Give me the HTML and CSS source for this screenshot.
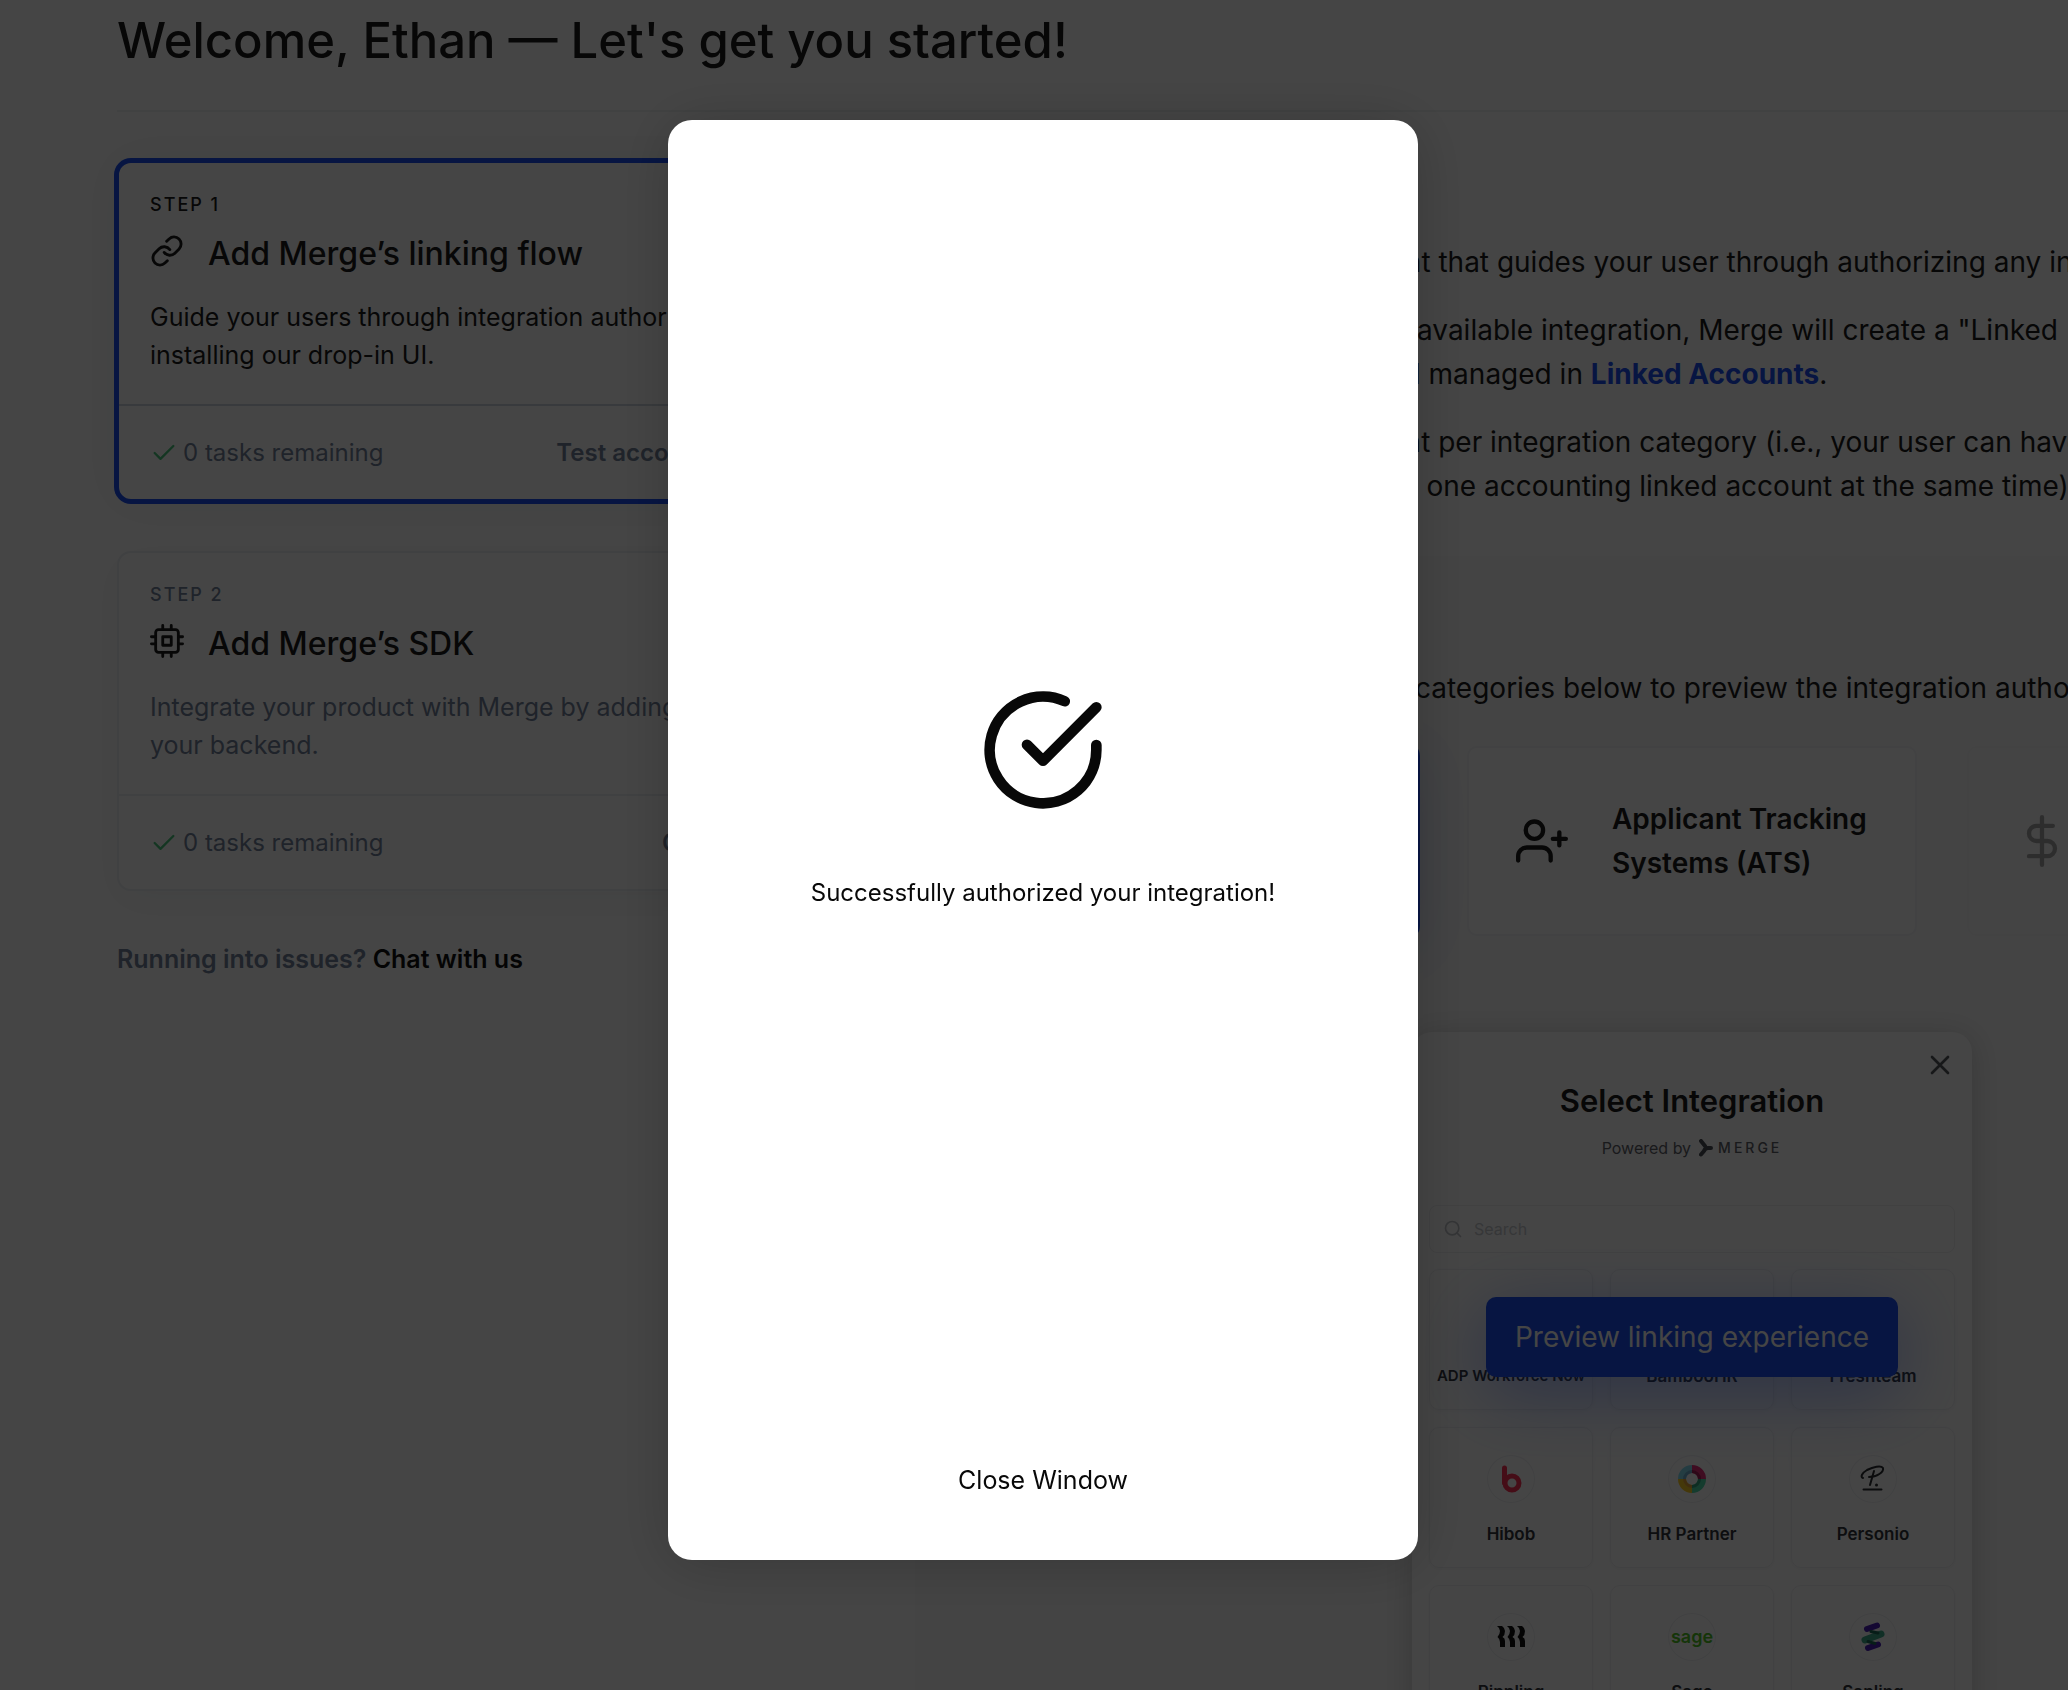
FILE: index.html
```
<!DOCTYPE html>
<html lang="en">
<head>
  <meta charset="UTF-8">
  <meta name="viewport" content="width=device-width, initial-scale=1.0">
  <title>Get started | Merge</title>
  <link rel="stylesheet" href="styles.css">
</head>
<body>
  <div class="page">
    <header class="page-header">
      <h1>Welcome, Ethan — Let's get you started!</h1>
    </header>

    <div class="columns">
      <aside class="steps">
        <section class="step-card active">
          <div class="step-body">
            <div class="step-label">Step 1</div>
            <div class="step-title">
              <svg class="icon" viewBox="0 0 24 24" width="34" height="34"><path d="M10 13a5 5 0 0 0 7.54.54l3-3a5 5 0 0 0-7.07-7.07l-1.72 1.71"/><path d="M14 11a5 5 0 0 0-7.54-.54l-3 3a5 5 0 0 0 7.07 7.07l1.71-1.71"/></svg>
              <h2>Add Merge’s linking flow</h2>
            </div>
            <p>Guide your users through integration authorization by<br>installing our drop-in UI.</p>
          </div>
          <div class="step-footer">
            <span class="tasks">
              <svg class="icon check" viewBox="0 0 24 24" width="28" height="28"><polyline points="20 6 9 17 4 12"/></svg>
              0 tasks remaining
            </span>
            <a href="#">Test account confirmed</a>
          </div>
        </section>

        <section class="step-card">
          <div class="step-body">
            <div class="step-label">Step 2</div>
            <div class="step-title">
              <svg class="icon" viewBox="0 0 24 24" width="34" height="34"><rect x="4" y="4" width="16" height="16" rx="2"/><rect x="9" y="9" width="6" height="6"/><path d="M9 1v3M15 1v3M9 20v3M15 20v3M20 9h3M20 14h3M1 9h3M1 14h3"/></svg>
              <h2>Add Merge’s SDK</h2>
            </div>
            <p>Integrate your product with Merge by adding our SDK to<br>your backend.</p>
          </div>
          <div class="step-footer">
            <span class="tasks">
              <svg class="icon check" viewBox="0 0 24 24" width="28" height="28"><polyline points="20 6 9 17 4 12"/></svg>
              0 tasks remaining
            </span>
            <a href="#">Go to API docs</a>
          </div>
        </section>

        <p class="help">Running into issues? <a href="#">Chat with us</a></p>
      </aside>

      <main class="content">
        <div class="intro">
          <h2>Add Merge’s linking flow</h2>
          <p>Merge Link is a drop-in component that guides your user through authorizing any integration.</p>
          <p>After your end user authorizes an available integration, Merge will create a "Linked<br>Account" that can be updated and managed in <a href="#">Linked Accounts</a>.</p>
          <p>Users can have one linked account per integration category (i.e., your user can have<br>one HRIS linked account and even one accounting linked account at the same time).</p>
        </div>

        <div class="preview">
          <h2>Preview Merge Link</h2>
          <p>Select one of the main supported categories below to preview the integration authorization flow.</p>

          <div class="categories">
            <button class="category selected" type="button">
              <svg class="icon" viewBox="0 0 24 24" width="52" height="52"><path d="M17 21v-2a4 4 0 0 0-4-4H5a4 4 0 0 0-4 4v2"/><circle cx="9" cy="7" r="4"/><path d="M23 21v-2a4 4 0 0 0-3-3.87M16 3.13a4 4 0 0 1 0 7.75"/></svg>
              <span>HR &amp; Payroll</span>
            </button>
            <button class="category" type="button">
              <svg class="icon" viewBox="0 0 24 24" width="52" height="52"><path d="M16 21v-2a4 4 0 0 0-4-4H5a4 4 0 0 0-4 4v2"/><circle cx="8.500" cy="7" r="4"/><path d="M20 8v6M23 11h-6"/></svg>
              <span>Applicant Tracking<br>Systems (ATS)</span>
            </button>
            <button class="category disabled" type="button" disabled>
              <svg class="icon" viewBox="0 0 24 24" width="52" height="52"><path d="M12 1v22M17 5H9.500a3.500 3.500 0 0 0 0 7h5a3.500 3.500 0 0 1 0 7H6"/></svg>
              <span>Accounting</span>
            </button>
          </div>

          <div class="widget">
            <button class="widget-close" type="button" aria-label="Close">
              <svg class="icon" viewBox="0 0 24 24" width="32" height="32"><path d="M18 6L6 18M6 6l12 12"/></svg>
            </button>
            <h3>Select Integration</h3>
            <div class="powered">
              Powered by
              <span class="merge-logo">
                <svg viewBox="0 0 14 18" width="14" height="18"><path d="M2 2l4 5M12 9H9Q6 9 5 12L2 15.500"/></svg>
                MERGE
              </span>
            </div>

            <label class="search">
              <svg class="icon" viewBox="0 0 24 24" width="20" height="20"><circle cx="11" cy="11" r="8"/><path d="M21 21l-4.300-4.300"/></svg>
              <input type="text" placeholder="Search" aria-label="Search">
            </label>

            <div class="tiles">
              <div class="tile"><div class="logo"></div><div class="name long">ADP Workforce Now</div></div>
              <div class="tile"><div class="logo"></div><div class="name">BambooHR</div></div>
              <div class="tile"><div class="logo"></div><div class="name">Freshteam</div></div>

              <div class="tile">
                <div class="logo">
                  <svg viewBox="0 0 48 48" width="48" height="48"><g fill="none" stroke="#ff3355" stroke-width="5" stroke-linecap="round"><path d="M17.500 13v15"/><circle cx="25" cy="28" r="7"/></g></svg>
                </div>
                <div class="name">Hibob</div>
              </div>
              <div class="tile">
                <div class="logo">
                  <svg viewBox="0 0 48 48" width="48" height="48">
                    <g fill="none" stroke-width="8">
                      <path d="M24 14a10 10 0 0 1 10 10" stroke="#e8307a"/>
                      <path d="M34 24a10 10 0 0 1-10 10" stroke="#4fdcaa"/>
                      <path d="M24 34a10 10 0 0 1-10-10" stroke="#ffd028"/>
                      <path d="M14 24a10 10 0 0 1 10-10" stroke="#86e0f2"/>
                    </g>
                    <g fill="none" stroke-width="3">
                      <path d="M24 16.500a7.500 7.500 0 0 1 7.500 7.500" stroke="#a81e58"/>
                      <path d="M31.500 24a7.500 7.500 0 0 1-7.500 7.500" stroke="#34a583"/>
                      <path d="M24 31.500a7.500 7.500 0 0 1-7.500-7.500" stroke="#eda83a"/>
                      <path d="M16.500 24a7.500 7.500 0 0 1 7.500-7.500" stroke="#6fb0d2"/>
                    </g>
                  </svg>
                </div>
                <div class="name">HR Partner</div>
              </div>
              <div class="tile">
                <div class="logo">
                  <svg viewBox="0 0 48 48" width="48" height="48"><g fill="none" stroke="#2a2c30" stroke-width="2" stroke-linecap="round" stroke-linejoin="round"><path d="M14 23c-3-1-1-5 4-8 6-3 14-5 16-2 1 4-6 9-14 9"/><path d="M25 16l-4 14M14.500 34.500h18"/></g><circle cx="27.500" cy="30" r="1.500" fill="#2a2c30"/></svg>
                </div>
                <div class="name">Personio</div>
              </div>

              <div class="tile">
                <div class="logo">
                  <svg viewBox="0 0 48 48" width="48" height="48">
                    <g fill="#111">
                      <path d="M10 13h5q3 2 3 5 0 4-2.500 6 2.500 1 2.500 4v6h-5v-5q0-3-2.500-5 2.500-3 2.500-6t-3-5z"/>
                      <path d="M20 13h5q3 2 3 5 0 4-2.500 6 2.500 1 2.500 4v6h-5v-5q0-3-2.500-5 2.500-3 2.500-6t-3-5z"/>
                      <path d="M30 13h5q3 2 3 5 0 4-2.500 6 2.500 1 2.500 4v6h-5v-5q0-3-2.500-5 2.500-3 2.500-6t-3-5z"/>
                    </g>
                  </svg>
                </div>
                <div class="name">Rippling</div>
              </div>
              <div class="tile">
                <div class="logo sage">sage</div>
                <div class="name">Sage</div>
              </div>
              <div class="tile">
                <div class="logo">
                  <svg viewBox="0 0 48 48" width="48" height="48">
                    <g fill="none" stroke-linecap="round">
                      <path d="M18 16l10-3.500M19 35l10-3.500" stroke="#4a1fb8" stroke-width="6"/>
                      <path d="M16 27l16-6" stroke="#3fae8e" stroke-width="7"/>
                      <path d="M19 28.500l7 2M22 18.500l7 1.500" stroke="#1d6b5a" stroke-width="3"/>
                    </g>
                  </svg>
                </div>
                <div class="name">Sapling</div>
              </div>
            </div>

            <button class="preview-button" type="button">Preview linking experience</button>
          </div>
        </div>
      </main>
    </div>
  </div>

  <div class="overlay">
    <div class="modal" role="dialog" aria-modal="true" aria-label="Integration authorized">
      <div class="modal-message">
        <svg class="icon" viewBox="0 0 24 24" width="128" height="128"><path d="M22 11.080V12a10 10 0 1 1-5.930-9.140"/><polyline points="22 4 12 14.010 9 11.010"/></svg>
        <p>Successfully authorized your integration!</p>
      </div>
      <button class="close-window" type="button">Close Window</button>
    </div>
  </div>
</body>
</html>
```
FILE: styles.css
```
* {
  box-sizing: border-box;
}
body {
  margin: 0;
  height: 100vh;
  overflow: hidden;
  background: #fff;
  color: #1a1a1a;
  font-family: Inter, "Liberation Sans", sans-serif;
}
h1, h2, h3, p {
  margin: 0;
  font-weight: 500;
}
a {
  color: inherit;
  text-decoration: none;
}
button {
  padding: 0;
  border: 0;
  background: none;
  color: inherit;
  font-family: inherit;
  cursor: pointer;
}
.icon {
  flex: none;
  fill: none;
  stroke: currentColor;
  stroke-width: 2;
  stroke-linecap: round;
  stroke-linejoin: round;
}

.page {
  padding: 11px 0 0 117px;
}
.page-header {
  padding-bottom: 39px;
  border-bottom: 2px solid #f0f2f4;
}
h1 {
  font-size: 49px;
  line-height: 60px;
}
.columns {
  display: flex;
  gap: 50px;
  padding-top: 49px;
}

/* left column */
.steps {
  flex: 0 0 748px;
}
.step-card {
  margin-bottom: 50px;
  border: 2px solid #eceff3;
  border-radius: 14px;
  background: #fff;
  box-shadow: 0 10px 40px rgba(20, 60, 50, 0.05);
}
.step-card.active {
  border-color: #1a4ef5;
  box-shadow: 0 0 0 3px #1a4ef5, 0 0 50px rgba(20, 60, 50, 0.08);
}
.step-body {
  padding: 30px 31px;
}
.step-label {
  color: #74839b;
  font-size: 18px;
  font-weight: 500;
  line-height: 24px;
  letter-spacing: 2px;
  text-transform: uppercase;
}
.step-title {
  display: flex;
  align-items: flex-start;
  gap: 24px;
  margin: 17px 0 24px;
}
.step-title h2 {
  font-size: 32px;
  line-height: 40px;
}
.step-body p {
  color: #74839b;
  font-size: 25px;
  font-weight: 400;
  line-height: 38px;
  white-space: nowrap;
}
.active .step-label, .active .step-body p {
  color: #1a1a1a;
}
.step-footer {
  display: flex;
  justify-content: space-between;
  padding: 28px 31px 27px;
  border-top: 2px solid #eceff3;
  color: #74839b;
  font-size: 24px;
  line-height: 38px;
}
.active .step-footer {
  border-color: #cfd6e0;
}
.step-footer a {
  font-weight: 600;
}
.tasks {
  display: flex;
  align-items: center;
  gap: 5px;
}
.check {
  stroke: #4cc97f;
}
.help {
  color: #74839b;
  font-size: 25px;
  font-weight: 600;
  line-height: 36px;
}
.help a {
  color: #111;
}

/* right column */
.content {
  flex: 0 0 1554px;
  font-size: 28px;
  line-height: 44px;
}
.content p {
  font-weight: 400;
  white-space: nowrap;
}
.content h2 {
  margin-bottom: 23px;
  font-size: 32px;
  line-height: 56px;
}
.intro {
  padding: 0 52px 48px;
}
.intro p + p {
  margin-top: 24px;
}
.intro a {
  color: #1a4ef5;
  font-weight: 700;
}
.preview {
  padding: 31px 52px;
  background: #fafafa;
}
.categories {
  display: grid;
  grid-template-columns: repeat(3, 1fr);
  gap: 50px;
  margin: 36px 0 96px;
}
.category {
  display: flex;
  align-items: center;
  gap: 44px;
  height: 190px;
  padding: 0 0 0 47px;
  border: 2px solid #f3f4f6;
  border-radius: 10px;
  background: #fff;
  font-size: 28px;
  font-weight: 600;
  line-height: 44px;
  text-align: left;
  white-space: nowrap;
}
.category.selected {
  border-color: #1a4ef5;
  box-shadow: 0 0 0 3px #1a4ef5, 0 10px 60px rgba(26, 78, 245, 0.15);
}
.category.disabled {
  background: #fcfcfc;
  border-color: #f7f7f8;
  color: #a8a8a8;
}

/* embedded component preview */
.widget {
  position: relative;
  width: 560px;
  margin: 0 auto;
  padding: 49px 17px 18px;
  border-radius: 20px;
  background: #fff;
  box-shadow: 0 4px 30px rgba(0, 0, 0, 0.18);
  text-align: center;
}
.widget-close {
  position: absolute;
  top: 17px;
  right: 16px;
  width: 32px;
  height: 32px;
  color: #55585e;
}
.widget h3 {
  font-size: 31px;
  font-weight: 600;
  line-height: 40px;
}
.powered {
  display: flex;
  justify-content: center;
  align-items: center;
  gap: 8px;
  margin: 15px 0 45px;
  color: #5f6269;
  font-size: 16px;
  line-height: 24px;
}
.merge-logo {
  display: flex;
  align-items: center;
  gap: 5px;
  font-size: 14px;
  font-weight: 500;
  letter-spacing: 3px;
}
.merge-logo svg {
  fill: none;
  stroke: #4a4e57;
  stroke-width: 4;
  stroke-linejoin: round;
  stroke-linecap: round;
}
.search {
  display: flex;
  align-items: center;
  gap: 11px;
  height: 48px;
  margin-bottom: 16px;
  padding: 0 13px;
  border: 1px solid #eeeff1;
  border-radius: 8px;
  color: #c0c3c8;
}
.search input {
  flex: 1;
  padding: 0;
  border: 0;
  outline: 0;
  background: none;
  font-family: inherit;
  font-size: 16px;
}
.search input::placeholder {
  color: #c8cacf;
}
.tiles {
  display: grid;
  grid-template-columns: repeat(3, 1fr);
  gap: 17px;
}
.tile {
  height: 141px;
  padding-top: 27px;
  border: 1px solid #f0f1f3;
  border-radius: 10px;
  box-shadow: 0 1px 4px rgba(0, 0, 0, 0.04);
}
.logo {
  width: 48px;
  height: 48px;
  margin: 0 auto 19px;
  border-radius: 50%;
  box-shadow: inset 0 0 0 1px #f0f1f3;
}
.logo svg {
  display: block;
}
.sage {
  display: flex;
  justify-content: center;
  align-items: center;
  color: #4fc424;
  font-size: 18px;
  font-weight: 600;
}
.name {
  color: #33363b;
  font-size: 17px;
  font-weight: 600;
  line-height: 24px;
}
.name.long {
  font-size: 15px;
}
.preview-button {
  position: absolute;
  top: 265px;
  left: 74px;
  right: 74px;
  height: 80px;
  border-radius: 10px;
  background: #1a4ef5;
  box-shadow: 0 16px 70px rgba(26, 78, 245, 0.4);
  color: #fff;
  font-size: 28px;
}

/* dialog */
.overlay {
  position: fixed;
  inset: 0;
  display: flex;
  justify-content: center;
  padding: 120px 0 130px 18px;
  background: rgba(0, 0, 0, 0.73);
}
.modal {
  display: flex;
  flex-direction: column;
  align-items: center;
  width: 750px;
  padding-bottom: 61px;
  border-radius: 24px;
  background: #fff;
  box-shadow: 0 4px 60px rgba(0, 0, 0, 0.2);
  color: #080808;
}
.modal-message {
  flex: 1;
  display: flex;
  flex-direction: column;
  align-items: center;
  justify-content: center;
  gap: 60px;
  padding-top: 16px;
}
.modal-message p {
  font-size: 24px;
  font-weight: 400;
  line-height: 38px;
}
.close-window {
  font-size: 25px;
  line-height: 38px;
}
```
